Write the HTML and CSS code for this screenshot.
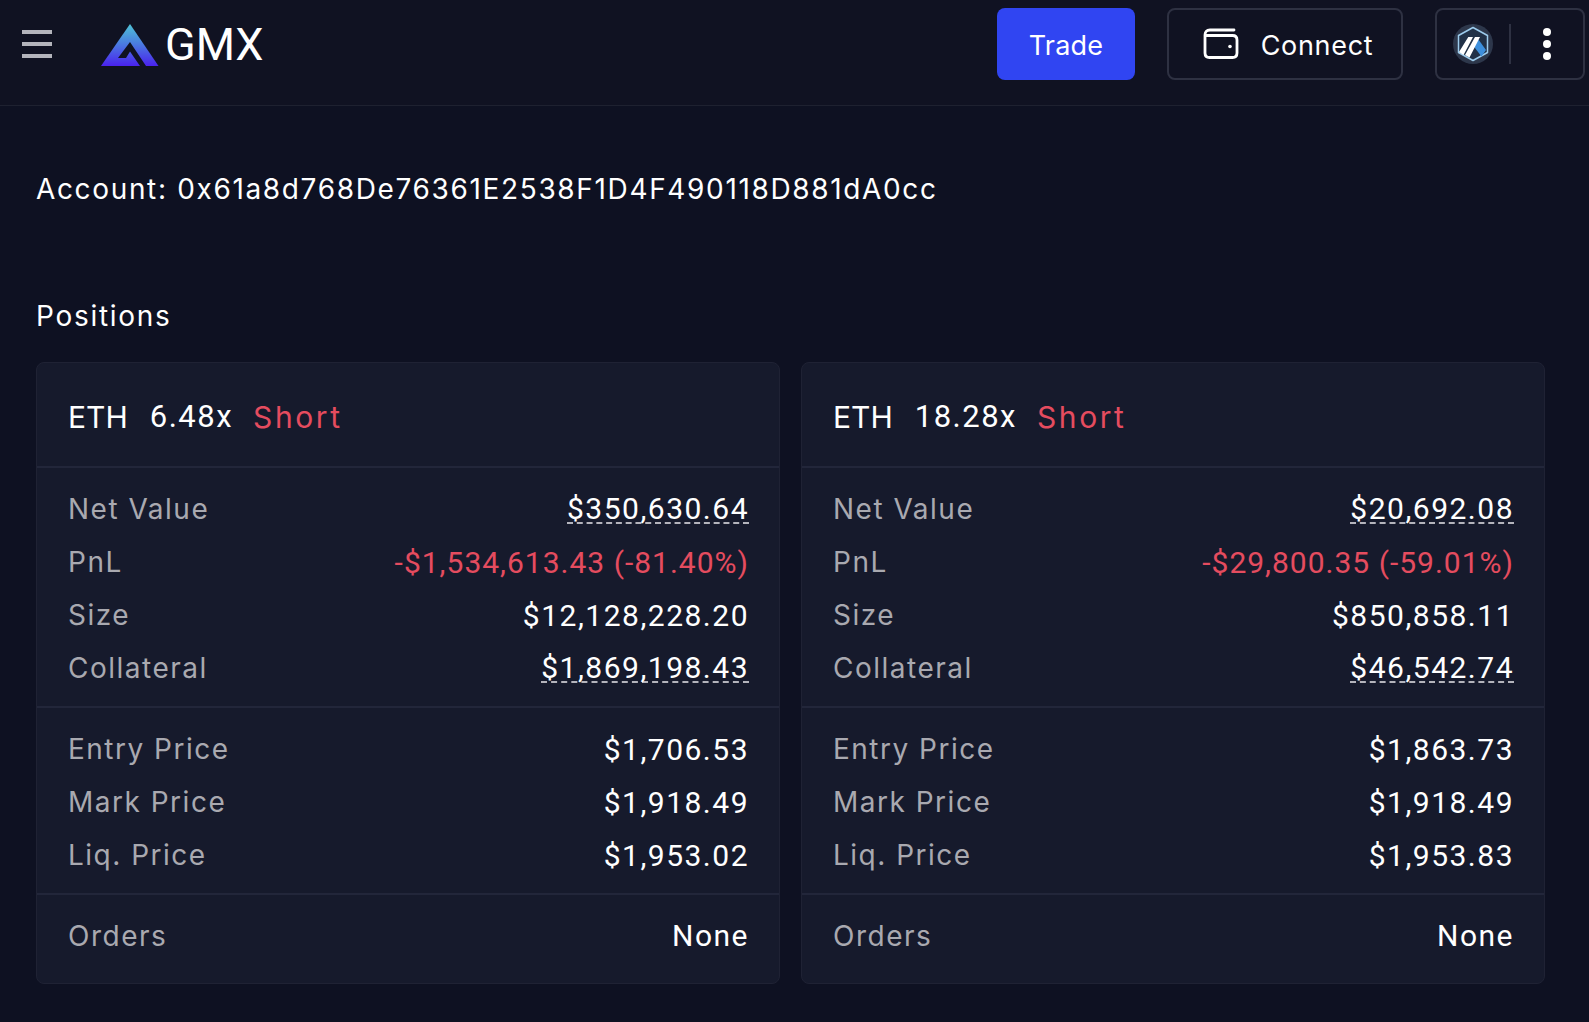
FILE: index.html
```html
<!DOCTYPE html>
<html lang="en">
<head>
  <meta charset="UTF-8">
  <meta name="viewport" content="width=device-width, initial-scale=1.0">
  <title>GMX Account Positions</title>
  <link rel="stylesheet" href="styles.css">
</head>
<body>
  <header class="header">
    <div class="header-left">
      <div class="menu-btn">
        <span class="menu-line"></span>
        <span class="menu-line"></span>
        <span class="menu-line"></span>
      </div>
      <div class="brand">
        <svg class="brand-mark" width="58" height="43" viewBox="0 0 58 43">
          <defs>
            <linearGradient id="logo-grad" x1="0" y1="0" x2="0" y2="1">
              <stop offset="0" stop-color="#4fc3d6"/>
              <stop offset="0.45" stop-color="#4a7fe0"/>
              <stop offset="1" stop-color="#4a22ee"/>
            </linearGradient>
          </defs>
          <path d="M29 0 L57.500 42 L0 42 Z" fill="url(#logo-grad)"/>
          <path d="M29 18 L45 42 L39 42 L29 27.500 L25 34 L17 34 Z" fill="#101222"/>
        </svg>
        <span class="brand-name">GMX</span>
      </div>
    </div>
    <div class="header-right">
      <a class="btn btn-trade"><span class="btn-text">Trade</span></a>
      <a class="btn btn-connect">
        <svg width="36" height="32" viewBox="0 0 36 32" fill="none" stroke="#fff" stroke-width="2.800" stroke-linecap="round">
          <path d="M31 2 H7 C3.500 2 2 4 2 7 V25 C2 28 4 29.500 6.500 29.500 H29.500 C32.500 29.500 34 28 34 25 V12 C34 9 32.500 7.500 29.500 7.500 H3"/>
          <circle cx="27" cy="18.500" r="1.800" fill="#fff" stroke="none"/>
        </svg>
        <span class="btn-text">Connect</span>
      </a>
      <div class="network">
        <svg class="network-icon" width="40" height="40" viewBox="0 0 40 40">
          <circle cx="20" cy="20" r="20" fill="#2d374b"/>
          <path d="M20 3.500 L34.500 11.500 V28.500 L20 36.500 L5.500 28.500 V11.500 Z" fill="#213147" stroke="#9dcced" stroke-width="1.500" stroke-linejoin="round"/>
          <path d="M24.700 14.500 L33 26 L28.500 32.500 L19.700 21 Z" fill="#3d8fdc"/>
          <path d="M15.300 13 H20 L10.500 31 L6 28 Z M22 13 H27 L16.500 33.500 L12 31 Z" fill="#fff"/>
        </svg>
        <span class="network-sep"></span>
        <div class="dots">
          <span class="dot"></span>
          <span class="dot"></span>
          <span class="dot"></span>
        </div>
      </div>
    </div>
  </header>

  <main class="content">
    <div class="account">Account: 0x61a8d768De76361E2538F1D4F490118D881dA0cc</div>
    <div class="section-title">Positions</div>

    <div class="positions">
      <div class="card">
        <div class="card-title">
          <span>ETH</span>
          <span class="leverage">6.48x</span>
          <span class="negative side">Short</span>
        </div>
        <div class="card-group">
          <div class="row"><span class="label">Net Value</span><span class="value dashed">$350,630.64</span></div>
          <div class="row"><span class="label">PnL</span><span class="value negative">-$1,534,613.43 (-81.40%)</span></div>
          <div class="row"><span class="label">Size</span><span class="value">$12,128,228.20</span></div>
          <div class="row"><span class="label">Collateral</span><span class="value dashed">$1,869,198.43</span></div>
        </div>
        <div class="card-group">
          <div class="row"><span class="label">Entry Price</span><span class="value">$1,706.53</span></div>
          <div class="row"><span class="label">Mark Price</span><span class="value">$1,918.49</span></div>
          <div class="row"><span class="label">Liq. Price</span><span class="value">$1,953.02</span></div>
        </div>
        <div class="card-group card-group-last">
          <div class="row"><span class="label">Orders</span><span class="value">None</span></div>
        </div>
      </div>

      <div class="card">
        <div class="card-title">
          <span>ETH</span>
          <span class="leverage">18.28x</span>
          <span class="negative side">Short</span>
        </div>
        <div class="card-group">
          <div class="row"><span class="label">Net Value</span><span class="value dashed">$20,692.08</span></div>
          <div class="row"><span class="label">PnL</span><span class="value negative">-$29,800.35 (-59.01%)</span></div>
          <div class="row"><span class="label">Size</span><span class="value">$850,858.11</span></div>
          <div class="row"><span class="label">Collateral</span><span class="value dashed">$46,542.74</span></div>
        </div>
        <div class="card-group">
          <div class="row"><span class="label">Entry Price</span><span class="value">$1,863.73</span></div>
          <div class="row"><span class="label">Mark Price</span><span class="value">$1,918.49</span></div>
          <div class="row"><span class="label">Liq. Price</span><span class="value">$1,953.83</span></div>
        </div>
        <div class="card-group card-group-last">
          <div class="row"><span class="label">Orders</span><span class="value">None</span></div>
        </div>
      </div>
    </div>
  </main>
</body>
</html>
```

FILE: styles.css
```css
body {
  font-family: Inter, 'Liberation Sans', sans-serif;
  background-color: #0e1122;
  color: #fff;
  margin: 0;
  height: 100vh;
  overflow: hidden;
  font-size: 30px;
}
.header {
  display: flex;
  align-items: center;
  justify-content: space-between;
  height: 105px;
  padding: 0 4px 0 22px;
  background-color: #101222;
  border-bottom: 1px solid #1e2130;
  box-sizing: content-box;
}
.header-left {
  display: flex;
  align-items: center;
  margin-top: -17px;
}
.menu-btn {
  display: flex;
  flex-direction: column;
  gap: 8.500px;
  width: 30px;
}
.menu-line {
  height: 3.500px;
  background-color: #b4b4bc;
}
.brand {
  display: flex;
  align-items: center;
  margin-left: 49px;
}
.brand-mark {
  margin-top: 2px;
}
.brand-name {
  font-family: Roboto, sans-serif;
  font-weight: 400;
  font-size: 45px;
  margin-left: 6px;
}
.header-right {
  display: flex;
  align-items: center;
  margin-top: -17px;
}
.btn {
  display: flex;
  align-items: center;
  justify-content: center;
  height: 72px;
  box-sizing: border-box;
  border-radius: 8px;
  font-size: 27px;
}
.btn-text {
  padding-top: 3px;
  letter-spacing: 0.2px;
}
.btn-trade {
  width: 138px;
  background-color: #3045f2;
}
.btn-connect {
  width: 236px;
  margin-left: 32px;
  gap: 22px;
  padding-left: 6px;
  border: 2px solid #2e3142;
}
.btn-connect .btn-text {
  letter-spacing: 0.7px;
}
.network {
  display: flex;
  align-items: center;
  width: 150px;
  height: 72px;
  box-sizing: border-box;
  margin-left: 32px;
  padding-left: 16px;
  border: 2px solid #2e3142;
  border-radius: 8px;
}
.network-sep {
  width: 2px;
  height: 40px;
  margin-left: 16px;
  background-color: #2e3142;
}
.dots {
  display: flex;
  flex-direction: column;
  gap: 4px;
  margin-left: 32px;
}
.dot {
  width: 8px;
  height: 8px;
  border-radius: 50%;
  background-color: #fff;
}
.content {
  padding: 0 44px 0 36px;
}
.account {
  margin-top: 65px;
  line-height: 36px;
  font-size: 28px;
  letter-spacing: 1.65px;
}
.section-title {
  margin-top: 91px;
  line-height: 36px;
  font-size: 28px;
  letter-spacing: 1.7px;
}
.positions {
  display: grid;
  grid-template-columns: 1fr 1fr;
  gap: 21px;
  margin-top: 28px;
}
.card {
  background-color: #161a2c;
  border: 1px solid #1f2234;
  border-radius: 8px;
}
.card-title {
  display: flex;
  gap: 22px;
  align-items: center;
  height: 99px;
  padding: 4px 31px 0;
  font-size: 30px;
}
.leverage {
  font-family: Roboto, sans-serif;
  font-size: 31px;
  letter-spacing: 1.5px;
}
.side {
  margin-left: -2px;
  letter-spacing: 2.6px;
}
.card-group {
  padding: 15px 31px 11px;
  border-top: 2px solid #22263a;
}
.card-group-last {
  padding-top: 14px;
  padding-bottom: 21px;
}
.row {
  display: flex;
  align-items: center;
  justify-content: space-between;
  height: 53px;
}
.label {
  color: #a9a9b0;
  font-size: 28px;
  letter-spacing: 1.5px;
  padding-bottom: 2px;
}
.card-group-last .label {
  padding-bottom: 0;
}
.value {
  font-family: Roboto, sans-serif;
  font-size: 30px;
  letter-spacing: 1.5px;
  margin-right: -1px;
}
.value.negative {
  letter-spacing: 1px;
}
.dashed {
  line-height: 26px;
  border-bottom: 2px dashed #b4b4bc;
}
.negative {
  color: #e54c5f;
}
```
